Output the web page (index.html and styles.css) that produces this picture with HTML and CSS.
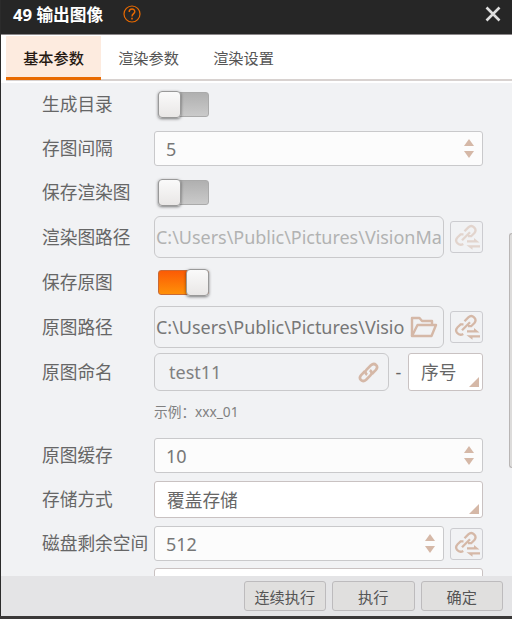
FILE: index.html
```
<!DOCTYPE html>
<html lang="zh-CN">
<head>
    <meta charset="UTF-8">
    <meta name="viewport" content="width=device-width, initial-scale=1.0">
    <title>输出图像</title>
    <link rel="stylesheet" href="styles.css">
</head>
<body>
    <svg class="symbols">
        <symbol id="link" viewBox="0 0 24 24">
            <g fill="none" stroke="currentColor" stroke-width="2.8">
                <path d="M10.5 14.5 C8 12.5 8.5 10.5 10 9 L14.5 4.5 C18.5 1 23 5.5 19.7 9.3 L15.5 13.5"/>
                <path d="M13.5 9.5 C16 11.5 15.5 13.5 14 15 L9.5 19.5 C5.5 23 1 18.5 4.3 14.7 L8.5 10.5"/>
            </g>
        </symbol>
        <symbol id="link-swap" viewBox="0 0 26 26">
            <g fill="none" stroke="currentColor" stroke-width="2.3">
                <path d="M10.5 7.2 L14.3 3.4 C18.3 -.2 23.6 5 20.4 9 L17.2 12.2 L14 12.2"/>
                <path d="M9.5 10.4 L6.6 10.4 L3.6 13.2 C-.2 17.2 4.5 22.6 9.3 20"/>
                <path d="M8 16.2 L16 8.2"/>
            </g>
            <g fill="currentColor">
                <path d="M13 16.2 H20 V14 L25.5 18.4 H13 Z"/>
                <path d="M26 21.2 H12.5 L18.5 25.8 V23.4 H26 Z"/>
            </g>
        </symbol>
    </svg>

    <div class="dialog">
        <div class="titlebar">
            <span class="title">49 输出图像</span>
            <svg class="help" viewBox="0 0 18 18" fill="none" stroke="currentColor">
                <circle cx="9" cy="9" r="8" stroke-width="1.2"/>
                <path d="M6.2 7 C6.2 3 12 3.2 11.8 6.8 C11.7 8.6 9 8.8 9 11.4" stroke-width="1.4"/>
                <path d="M9 12.8 V14.4" stroke-width="1.6"/>
            </svg>
            <svg class="close" viewBox="0 0 16 16">
                <path d="M1.5 1.5 L14.5 14.5 M14.5 1.5 L1.5 14.5" stroke="currentColor" stroke-width="2.6"/>
            </svg>
        </div>

        <div class="tabs">
            <div class="tab active">基本参数</div>
            <div class="tab">渲染参数</div>
            <div class="tab">渲染设置</div>
        </div>

        <div class="content">
            <div class="form">
                <div class="row row-toggle">
                    <label>生成目录</label>
                    <div class="toggle"><i></i></div>
                </div>
                <div class="row row-number">
                    <label>存图间隔</label>
                    <div class="field number"><span>5</span><div class="spin"><i class="up"></i><i class="down"></i></div></div>
                </div>
                <div class="row row-toggle">
                    <label>保存渲染图</label>
                    <div class="toggle"><i></i></div>
                </div>
                <div class="row row-path disabled">
                    <label>渲染图路径</label>
                    <div class="field path"><span>C:\Users\Public\Pictures\VisionMa</span></div>
                    <div class="link-btn"><svg><use href="#link-swap"/></svg></div>
                </div>
                <div class="row row-toggle">
                    <label>保存原图</label>
                    <div class="toggle on"><i></i></div>
                </div>
                <div class="row row-path">
                    <label>原图路径</label>
                    <div class="field path">
                        <span>C:\Users\Public\Pictures\Visio</span>
                        <svg class="folder" viewBox="0 0 28 22" fill="none" stroke="currentColor" stroke-width="2.4" stroke-linejoin="round">
                            <path d="M2 20 V2 H9.5 L12 5 H22 V9"/>
                            <path d="M2 20 L7.5 9 H26 L21.5 20 Z"/>
                        </svg>
                    </div>
                    <div class="link-btn"><svg><use href="#link-swap"/></svg></div>
                </div>
                <div class="row row-name">
                    <label>原图命名</label>
                    <div class="field name"><span>test11</span><svg class="chain"><use href="#link"/></svg></div>
                    <span class="dash">-</span>
                    <div class="field select"><span>序号</span><i class="corner"></i></div>
                </div>
                <div class="hint">示例：xxx_01</div>
                <div class="row row-number">
                    <label>原图缓存</label>
                    <div class="field number"><span>10</span><div class="spin"><i class="up"></i><i class="down"></i></div></div>
                </div>
                <div class="row row-select">
                    <label>存储方式</label>
                    <div class="field select"><span>覆盖存储</span><i class="corner"></i></div>
                </div>
                <div class="row row-number">
                    <label>磁盘剩余空间</label>
                    <div class="field number"><span>512</span><div class="spin"><i class="up"></i><i class="down"></i></div></div>
                    <div class="link-btn"><svg><use href="#link-swap"/></svg></div>
                </div>
                <div class="row row-last">
                    <label></label>
                    <div class="field select"></div>
                </div>
            </div>
            <div class="scrollbar"></div>
        </div>

        <div class="footer">
            <button>连续执行</button>
            <button>执行</button>
            <button>确定</button>
        </div>
    </div>
</body>
</html>
```
FILE: styles.css
```
:root {
    --icon-color: #d5b8a7;
    --border-color: #c9c9cb;
    --text-color: #666;
    --orange: #e96a00;
}

* {
    margin: 0;
    padding: 0;
    box-sizing: border-box;
}

body {
    width: 512px;
    height: 619px;
    overflow: hidden;
    background-color: #3a3838;
    font-family: "Noto Sans", "Noto Sans CJK SC", sans-serif;
    color: var(--text-color);
}

svg {
    display: block;
    flex: none;
}

.symbols {
    width: 0;
    height: 0;
    position: absolute;
}

.dialog {
    height: 616px;
    display: flex;
    flex-direction: column;
    border-left: 1px solid #2b2b2b;
    background-color: #fff;
}

.titlebar {
    height: 35px;
    flex: none;
    display: flex;
    align-items: center;
    padding: 0 11px 6px 12px;
    background-color: #262626;
    border-bottom: 1px solid #8b8789;
}

.title {
    width: 110px;
    padding-top: 2px;
    color: #fff;
    font: bold 16.7px/26px "Open Sans", "Noto Sans CJK SC", sans-serif;
    white-space: nowrap;
}

.help {
    width: 18px;
    height: 18px;
    color: var(--orange);
}

.close {
    width: 16px;
    height: 16px;
    margin-left: auto;
    color: #dedede;
}

.tabs {
    height: 48px;
    flex: none;
    display: flex;
    margin-left: 5px;
    padding-top: 1px;
    background: linear-gradient(#d8d2d0, #d8d2d0) 0 44px / 100% 2px no-repeat;
}

.tab {
    width: 95px;
    height: 44px;
    padding-top: 10px;
    text-align: center;
    font-size: 15.2px;
    line-height: 24px;
    color: #555;
}

.tab.active {
    background-color: #fdebdf;
    border-bottom: 3px solid var(--orange);
    color: #261a14;
    font-weight: 500;
}

.content {
    height: 493px;
    flex: none;
    display: flex;
    justify-content: space-between;
    overflow: hidden;
    background-color: #f1f2f4;
}

.form {
    width: 482px;
    padding-left: 41px;
    padding-top: 9px;
}

.row {
    display: flex;
    align-items: center;
}

.row label {
    width: 112px;
    flex: none;
    font-size: 17.7px;
    line-height: 25px;
    white-space: nowrap;
}

.row-toggle {
    height: 25px;
}

.row-number {
    height: 35px;
}

.row-number label,
.row-select label {
    padding-bottom: 1px;
}

.row-path {
    height: 42px;
}

.row-name {
    height: 38px;
}

.row-select {
    height: 37px;
}

.row-toggle + .row-number {
    margin-top: 14px;
}

.row-number + .row-toggle {
    margin-top: 14px;
}

.row-toggle + .row-path {
    margin-top: 11px;
}

.row-path + .row-toggle {
    margin-top: 12px;
}

.row-path + .row-name {
    margin-top: 5px;
}

.row-number + .row-select,
.row-select + .row-number {
    margin-top: 8px;
}

.row-last {
    height: 35px;
    margin-top: 7px;
}

.field {
    flex: 1;
    height: 100%;
    min-width: 0;
    display: flex;
    align-items: center;
    justify-content: space-between;
    border: 1px solid var(--border-color);
    border-radius: 3px;
    font-size: 18px;
    white-space: nowrap;
    overflow: hidden;
}

.number {
    padding: 0 8px 0 11px;
    background-color: #fcfcfc;
    color: #777;
}

.path {
    padding: 0 5px 0 1px;
    border-width: 1.5px;
    border-radius: 6px;
    color: #777;
}

.path span {
    letter-spacing: -0.03px;
}

.name {
    flex: 0 0 235px;
    padding: 0 8px 0 14px;
    border-radius: 6px;
    color: #808080;
}

.select {
    position: relative;
    padding-left: 12px;
    background-color: #fff;
    border-color: #c9c2c2;
    font-size: 17.7px;
}

.select span {
    padding-bottom: 2px;
}

.disabled .path {
    padding-right: 0;
    color: #b2b2b2;
}

.disabled .link-btn svg {
    opacity: 0.5;
}

.dash {
    width: 19px;
    text-align: center;
    font-size: 18px;
}

.spin {
    display: flex;
    flex-direction: column;
    gap: 5px;
    padding-bottom: 1px;
}

.spin i {
    border-left: 5px solid transparent;
    border-right: 5px solid transparent;
}

.spin .up {
    border-bottom: 7px solid var(--icon-color);
}

.spin .down {
    border-top: 7px solid var(--icon-color);
}

.corner {
    position: absolute;
    right: 3px;
    bottom: 3px;
    border-left: 10px solid transparent;
    border-bottom: 10px solid var(--icon-color);
}

.link-btn {
    width: 33px;
    height: 32px;
    flex: none;
    margin-left: 6px;
    display: flex;
    align-items: center;
    justify-content: center;
    border: 1px solid #ccccd0;
    border-radius: 3px;
    color: var(--icon-color);
}

.link-btn svg {
    width: 26px;
    height: 26px;
}

.folder {
    width: 28px;
    height: 22px;
    color: var(--icon-color);
}

.chain {
    width: 23px;
    height: 23px;
    color: var(--icon-color);
}

.toggle {
    width: 51px;
    height: 25px;
    margin-left: 4px;
    display: flex;
    border: 1px solid #aaa;
    border-radius: 3px;
    background: linear-gradient(#b0b0b0, #cacaca);
}

.toggle i {
    width: 23px;
    height: 27px;
    margin: -2px 0 0 -1px;
    border: 1px solid #999;
    border-radius: 4px;
    background: linear-gradient(#fafafa, #e9e7e6);
    box-shadow: 0 1px 3px rgba(0, 0, 0, 0.5);
}

.toggle.on {
    justify-content: flex-end;
    border-color: #c96a35;
    background: linear-gradient(#fb5b05, #ff9008);
}

.toggle.on i {
    margin: -2px -1px 0 0;
}

.hint {
    height: 47px;
    padding: 11px 0 0 112px;
    font-size: 13.7px;
    line-height: 20px;
    color: #808080;
}

.scrollbar {
    width: 3px;
    height: 235px;
    margin-top: 150px;
    background-color: #dddcdb;
    border: 1px solid #b9b6b5;
    border-right: none;
    border-radius: 3px 0 0 3px;
}

.footer {
    flex: 1;
    display: flex;
    justify-content: flex-end;
    gap: 6px;
    padding: 5px 9px 0 0;
    background-color: #e4e4e6;
}

.footer button {
    width: 82.5px;
    height: 30px;
    padding-bottom: 1px;
    border: 1px solid #bdbbbd;
    border-radius: 3px;
    background-color: #e0dfde;
    color: #555;
    font-family: inherit;
    font-size: 15.2px;
}
```
